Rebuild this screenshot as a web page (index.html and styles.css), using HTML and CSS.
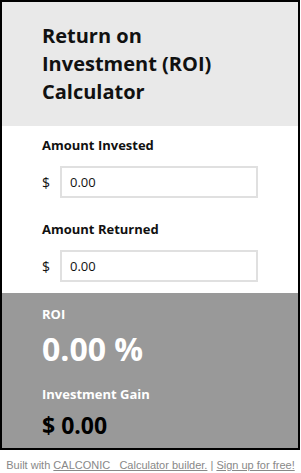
FILE: index.html
```html
<!DOCTYPE html>
<html lang="en">
<head>
    <meta charset="UTF-8">
    <meta name="viewport" content="width=device-width, initial-scale=1.0">
    <title>Return on Investment (ROI) Calculator</title>
    <link rel="stylesheet" href="styles.css">
</head>
<body>
    <div class="calc">
        <div class="calc-header">
            <h1>Return on Investment (ROI) Calculator</h1>
        </div>

        <div class="calc-inputs">
            <div class="field">
                <label for="invested">Amount Invested</label>
                <div class="field-row">
                    <span class="unit">$</span>
                    <input type="text" id="invested" value="0.00">
                </div>
            </div>
            <div class="field">
                <label for="returned">Amount Returned</label>
                <div class="field-row">
                    <span class="unit">$</span>
                    <input type="text" id="returned" value="0.00">
                </div>
            </div>
        </div>

        <div class="calc-results">
            <div class="result-label">ROI</div>
            <div class="result-big">0.00 %</div>
            <div class="result-label gain-label">Investment Gain</div>
            <div class="result-gain">$ 0.00</div>
        </div>
    </div>

    <p class="footer">Built with <a href="#">CALCONIC_ Calculator builder.</a> | <a href="#">Sign up for free!</a></p>
</body>
</html>
```

FILE: styles.css
```css
body {
    margin: 0;
    font-family: "Open Sans", sans-serif;
    background-color: white;
}
.calc {
    width: 296px;
    border: 2px solid black;
}
.calc-header {
    background-color: #e9e9e9;
    padding: 20px 40px;
}
h1 {
    margin: 0;
    font-size: 20px;
    line-height: 28px;
    font-weight: bold;
    color: #111;
}
.calc-inputs {
    padding: 10px 40px 11px;
}
.field {
    margin-bottom: 22px;
}
.field:last-child {
    margin-bottom: 0;
}
label {
    display: block;
    font-size: 13px;
    font-weight: bold;
    color: #111;
    margin-bottom: 12px;
}
.field-row {
    display: flex;
    align-items: center;
    gap: 10px;
}
.unit {
    font-size: 14px;
    color: #111;
    width: 8px;
}
input {
    width: 198px;
    height: 32px;
    box-sizing: border-box;
    border: 2px solid #e0e0e0;
    padding: 0 8px;
    font-family: "Open Sans", sans-serif;
    font-size: 13px;
    color: #111;
}
.calc-results {
    background-color: #999;
    padding: 12px 40px 7px;
    color: white;
}
.result-label {
    font-size: 13px;
    font-weight: bold;
}
.result-big {
    font-size: 32px;
    font-weight: bold;
    line-height: 44px;
    margin-top: 4px;
}
.gain-label {
    margin-top: 14px;
}
.result-gain {
    font-size: 23px;
    font-weight: bold;
    color: black;
    line-height: 32px;
    margin-top: 6px;
}
.footer {
    margin: 8px 0 0;
    text-align: center;
    white-space: nowrap;
    font-family: "Liberation Sans", Arial, sans-serif;
    font-size: 11px;
    line-height: 14px;
    color: #888;
}
.footer a {
    color: #888;
}
```
